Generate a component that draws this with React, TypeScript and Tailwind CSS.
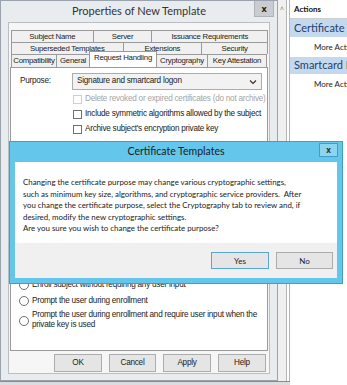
import * as React from 'react';

const tabRows = [
  [
    { label: 'Subject Name', w: 'w-[83px]' },
    { label: 'Server', w: 'w-[60px]' },
    { label: 'Issuance Requirements', w: 'w-[117px]' },
  ],
  [
    { label: 'Superseded Templates', w: 'w-[113px]' },
    { label: 'Extensions', w: 'w-[80px]' },
    { label: 'Security', w: 'w-[67px]' },
  ],
];

const lastRow = [
  { label: 'Compatibility', w: 'w-[46px]', active: false },
  { label: 'General', w: 'w-[34px]', active: false },
  { label: 'Request Handling', w: 'w-[68px]', active: true },
  { label: 'Cryptography', w: 'w-[52px]', active: false },
  { label: 'Key Attestation', w: 'w-[60px]', active: false },
];

// small dialog text (Tahoma-like, shrunk with the screenshot)
const small = "font-['Liberation_Sans',Arial,sans-serif] text-[8.2px] tracking-[-0.25px] whitespace-nowrap";
const tabText = "font-['Liberation_Sans',Arial,sans-serif] text-[7.8px] tracking-[-0.25px] whitespace-nowrap";
const segoe = "font-['Lato','Open_Sans',sans-serif]";

function Checkbox({ disabled }: { disabled?: boolean }) {
  return (
    <span
      className={`w-[9px] h-[9px] shrink-0 border bg-white ${disabled ? 'border-[#cfcfcf]' : 'border-[#707070]'}`}
    />
  );
}

function Radio() {
  return <span className="w-[10px] h-[10px] shrink-0 rounded-full border border-[#707070] bg-white" />;
}

function WinButton({ label, w }: { label: string; w: string }) {
  return (
    <div className={`${w} h-[18px] flex items-center justify-center border border-[#acacac] bg-[#e5e5e5] text-[#222] ${small}`}>
      {label}
    </div>
  );
}

export default function App() {
  return (
    <div className="relative w-[347px] h-[385px] overflow-hidden bg-white flex">
      {/* properties window */}
      <div className="w-[278px] h-[381px] bg-[#e9ecef] border border-[#9aa3ad] flex flex-col shrink-0">
        <div className="relative h-[21px] shrink-0 flex items-center justify-center">
          <span className={`text-[11px] text-[#333] whitespace-nowrap ${segoe}`}>Properties of New Template</span>
          <div className="absolute right-[3px] top-0 w-[20px] h-[16px] bg-[#c9cdd2] border border-[#aeb3b9] border-t-0 flex items-center justify-center text-[9px] font-bold text-[#222]">
            x
          </div>
        </div>

        <div className="flex-1 mx-[7px] mb-[6px] bg-[#f6f6f6] border border-[#b9bec4] flex flex-col">
          <div className="pt-[7px] px-[2px] flex flex-col">
            {tabRows.map((row, i) => (
              <div key={i} className="flex h-[12px]">
                {row.map((t) => (
                  <div
                    key={t.label}
                    className={`${t.w} border border-[#9a9a9a] border-b-0 -mr-px bg-[#f0f0f0] flex items-center justify-center text-[#222] ${tabText}`}
                  >
                    {t.label}
                  </div>
                ))}
              </div>
            ))}
            <div className="flex h-[13px] items-end relative z-10">
              {lastRow.map((t) => (
                <div
                  key={t.label}
                  className={`${t.w} -mr-px border border-[#9a9a9a] border-b-0 flex items-center justify-center text-[#222] ${tabText} ${
                    t.active ? 'bg-white h-[16px] pb-[3px] z-10' : 'bg-[#f0f0f0] h-[13px]'
                  }`}
                >
                  {t.label}
                </div>
              ))}
            </div>
          </div>

          <div className={`mx-[1px] h-[284px] bg-white border border-[#9a9a9a] flex flex-col text-[#222] ${small}`}>
            <div className="flex items-center mt-[5px] h-[17px]">
              <span className="w-[61px] pl-[9px]">Purpose:</span>
              <div className="w-[190px] h-[17px] border border-[#acacac] bg-[#f2f2f2] flex items-center justify-between px-[4px]">
                <span>Signature and smartcard logon</span>
                <svg width="8" height="6" viewBox="0 0 8 6">
                  <path d="M1 1.5 L4 4.5 L7 1.5" stroke="#333" strokeWidth="1.2" fill="none" />
                </svg>
              </div>
            </div>
            <div className="flex flex-col pl-[62px] mt-[4px] gap-[5px]">
              <div className="flex items-center gap-[3px] h-[10px]">
                <Checkbox disabled />
                <span className="text-[#a5a5a5]">Delete revoked or expired certificates (do not archive)</span>
              </div>
              <div className="flex items-center gap-[3px] h-[10px]">
                <Checkbox />
                <span>Include symmetric algorithms allowed by the subject</span>
              </div>
              <div className="flex items-center gap-[3px] h-[10px]">
                <Checkbox />
                <span>Archive subject's encryption private key</span>
              </div>
            </div>

            <div className="flex flex-col pl-[8px] mt-[146px] gap-[6px]">
              <div className="flex items-center gap-[3px] h-[10px]">
                <Radio />
                <span>Enroll subject without requiring any user input</span>
              </div>
              <div className="flex items-center gap-[3px] h-[10px]">
                <Radio />
                <span>Prompt the user during enrollment</span>
              </div>
              <div className="flex items-start gap-[3px] -mt-[2px]">
                <span className="mt-[6px] flex">
                  <Radio />
                </span>
                <span className="leading-[10px]">
                  Prompt the user during enrollment and require user input when the
                  <br />
                  private key is used
                </span>
              </div>
            </div>
          </div>

          <div className="flex justify-end gap-[7px] pr-[3px] mt-[3px]">
            <WinButton label="OK" w="w-[48px]" />
            <WinButton label="Cancel" w="w-[47px]" />
            <WinButton label="Apply" w="w-[48px]" />
            <WinButton label="Help" w="w-[48px]" />
          </div>
        </div>
      </div>

      {/* scroll strip */}
      <div className="w-[9px] h-[381px] bg-[#f0f0f0] border-r border-[#b5b5b5] flex justify-center shrink-0">
        <span className="text-[7px] text-[#777] leading-none mt-[6px]">^</span>
      </div>

      {/* actions pane */}
      <div className={`flex-1 min-w-0 overflow-hidden border-l border-[#b5b5b5] ml-[2px] flex flex-col ${segoe}`}>
        <div className="h-[19px] border-b border-[#cfcfcf] flex items-center pl-[4px] text-[8px] font-bold text-[#111] whitespace-nowrap">
          Actions
        </div>
        <div className="h-[18px] bg-[#c4d8ee] flex items-center pl-[4px] text-[11px] text-[#1f3f6b] whitespace-nowrap">
          Certificate Templates
        </div>
        <div className="h-[20px] flex items-center pl-[24px] text-[8px] text-[#222] whitespace-nowrap">
          More Actions
        </div>
        <div className="h-[17px] bg-[#c4d8ee] flex items-center pl-[4px] text-[11px] text-[#1f3f6b] whitespace-nowrap">
          Smartcard Logon
        </div>
        <div className="h-[20px] flex items-center pl-[24px] text-[8px] text-[#222] whitespace-nowrap">
          More Actions
        </div>
      </div>

      <div className="absolute left-0 bottom-0 w-[290px] h-[4px] bg-[#dcdcdc] border-t border-[#8a8a8a]" />

      {/* modal */}
      <div className="absolute left-[9px] top-[141px] w-[334px] h-[143px] bg-[#64c6ea] border border-[#3f9fc6] flex flex-col">
        <div className="relative h-[20px] shrink-0 flex items-center justify-center">
          <span className={`text-[10.5px] text-[#1b1b1b] whitespace-nowrap ${segoe}`}>Certificate Templates</span>
          <div className="absolute right-[4px] top-[1px] w-[19px] h-[14px] bg-[#8dd4ef] border border-[#3f9fc6] flex items-center justify-center text-[8px] font-bold text-[#333]">
            x
          </div>
        </div>
        <div className="flex-1 mx-[5px] mb-[5px] bg-white flex flex-col">
          <div className={`flex-1 pt-[15px] pl-[8px] text-[7.9px] leading-[11.6px] text-[#1b1b1b] whitespace-nowrap ${segoe}`}>
            Changing the certificate purpose may change various cryptographic settings,
            <br />
            such as minimum key size, algorithms, and cryptographic service providers.&nbsp; After
            <br />
            you change the certificate purpose, select the Cryptography tab to review and, if
            <br />
            desired, modify the new cryptographic settings.
            <br />
            Are you sure you wish to change the certificate purpose?
          </div>
          <div className="h-[35px] bg-[#f0f0f0] flex items-center justify-end gap-[7px] pr-[4px]">
            <div className={`w-[58px] h-[17px] border border-[#5aa7d6] bg-[#e5e5e5] flex items-center justify-center text-[8px] text-[#222] ${segoe}`}>
              Yes
            </div>
            <div className={`w-[57px] h-[17px] border border-[#acacac] bg-[#e5e5e5] flex items-center justify-center text-[8px] text-[#222] ${segoe}`}>
              No
            </div>
          </div>
        </div>
      </div>
    </div>
  );
}
